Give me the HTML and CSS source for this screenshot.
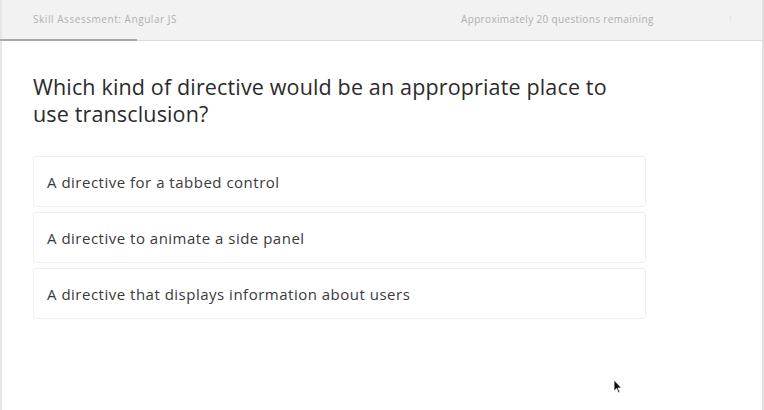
FILE: index.html
```html
<!DOCTYPE html>
<html>
<head>
<meta charset="utf-8">
<link rel="stylesheet" href="styles.css">
</head>
<body>
<div class="frame">
  <header class="topbar">
    <span class="title">Skill Assessment: Angular JS</span>
    <span class="remaining">Approximately 20 questions remaining</span>
    <span class="dot"></span>
    <div class="progress"><div class="progress-fill" style="width:137px"></div></div>
  </header>
  <main class="content">
    <h1 class="question">Which kind of directive would be an appropriate place to use transclusion?</h1>
    <ul class="answers">
      <li class="answer">A directive for a tabbed control</li>
      <li class="answer">A directive to animate a side panel</li>
      <li class="answer">A directive that displays information about users</li>
    </ul>
  </main>
  <svg class="cursor" width="10" height="16" viewBox="0 0 10 16"><path d="M1 1 L1 12 L3.5 9.5 L5.5 14 L7 13.3 L5 9 L8.5 9 Z" fill="#111" stroke="#fff" stroke-width="0.8"/></svg>
</div>
</body>
</html>
```

FILE: styles.css
```css
html, body {
  margin: 0;
  padding: 0;
  background: #fff;
}
body {
  font-family: "Open Sans", "Lato", sans-serif;
  width: 764px;
  height: 410px;
  overflow: hidden;
}
.frame {
  position: relative;
  width: 764px;
  height: 410px;
  box-sizing: border-box;
  border-left: 2px solid #e6e6e6;
  border-right: 2px solid #e0e0e0;
}
.topbar {
  position: relative;
  height: 41px;
  background: #f2f2f2;
  border-bottom: 1px solid #dcdcdc;
  display: flex;
  align-items: center;
  padding-left: 31px;
  padding-bottom: 3px;
  box-sizing: border-box;
  font-size: 10px;
  color: #b0b0b0;
}
.title {
  width: 428px;
  letter-spacing: 0.55px;
}
.remaining {
  flex: none;
  letter-spacing: 0.35px;
}
.dot {
  width: 1px;
  height: 7px;
  background: #e6e6e6;
  margin-left: 76px;
}
.progress {
  position: absolute;
  left: -2px;
  bottom: -1px;
  width: 766px;
  height: 2px;
}
.progress-fill {
  height: 2px;
  background: #a9a9a9;
}
.content {
  padding: 32px 0 0 31px;
}
.question {
  margin: 0;
  width: 600px;
  font-size: 21.5px;
  font-weight: normal;
  line-height: 27px;
  letter-spacing: 0.15px;
  color: #2b2b2b;
}
.answers {
  list-style: none;
  margin: 29px 0 0 0;
  padding: 0;
  width: 613px;
  display: flex;
  flex-direction: column;
  gap: 5px;
}
.answer {
  height: 51px;
  box-sizing: border-box;
  border: 1px solid #efefef;
  border-radius: 3px;
  display: flex;
  align-items: center;
  padding-left: 13px;
  font-size: 15px;
  letter-spacing: 0.5px;
  color: #3a3a3a;
}
.cursor {
  position: absolute;
  left: 611px;
  top: 379px;
}
```
